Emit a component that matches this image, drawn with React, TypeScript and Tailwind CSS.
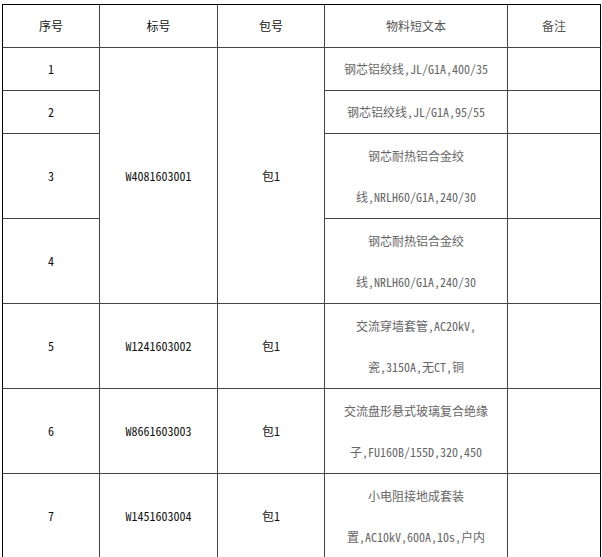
import React from "react";

const font = {
  fontFamily:
    '"Noto Sans Mono CJK SC", "Noto Sans CJK SC", "Liberation Mono", monospace',
};

type Row = { no: string; lines: string[] };

export default function App() {
  const td = "border-r border-b border-[#444] text-center align-middle p-0";
  const last = "border-r border-b border-r-black border-b-[#444] text-center align-middle p-0";
  const mat = "text-[#666] leading-[41px]";
  return (
    <div className="bg-white w-[602px] h-[557px] overflow-hidden" style={font}>
      <table
        className="ml-[2px] mt-[4px] border-separate border-spacing-0 table-fixed border-t border-l border-black text-[12px] text-[#111]"
        style={{ width: 599 }}
      >
        <colgroup>
          <col style={{ width: 97 }} />
          <col style={{ width: 118 }} />
          <col style={{ width: 107 }} />
          <col style={{ width: 183 }} />
          <col style={{ width: 93 }} />
        </colgroup>
        <tbody>
          <tr className="h-[43px]">
            <td className={td}>序号</td>
            <td className={td}>标号</td>
            <td className={td}>包号</td>
            <td className={`${td} text-[#555]`}>物料短文本</td>
            <td className={`${last} text-[#555]`}>备注</td>
          </tr>
          <tr className="h-[43px]">
            <td className={td}>1</td>
            <td className={td} rowSpan={4}>W4081603001</td>
            <td className={td} rowSpan={4}>包1</td>
            <td className={td}><span className="text-[#666]">钢芯铝绞线,JL/G1A,400/35</span></td>
            <td className={last}></td>
          </tr>
          <tr className="h-[43px]">
            <td className={td}>2</td>
            <td className={td}><span className="text-[#666]">钢芯铝绞线,JL/G1A,95/55</span></td>
            <td className={last}></td>
          </tr>
          <tr className="h-[85px]">
            <td className={td}>3</td>
            <td className={td}>
              <div className={mat}>钢芯耐热铝合金绞</div>
              <div className={mat}>线,NRLH60/G1A,240/30</div>
            </td>
            <td className={last}></td>
          </tr>
          <tr className="h-[85px]">
            <td className={td}>4</td>
            <td className={td}>
              <div className={mat}>钢芯耐热铝合金绞</div>
              <div className={mat}>线,NRLH60/G1A,240/30</div>
            </td>
            <td className={last}></td>
          </tr>
          <tr className="h-[85px]">
            <td className={td}>5</td>
            <td className={td}>W1241603002</td>
            <td className={td}>包1</td>
            <td className={td}>
              <div className={mat}>交流穿墙套管,AC20kV,</div>
              <div className={mat}>瓷,3150A,无CT,铜</div>
            </td>
            <td className={last}></td>
          </tr>
          <tr className="h-[85px]">
            <td className={td}>6</td>
            <td className={td}>W8661603003</td>
            <td className={td}>包1</td>
            <td className={td}>
              <div className={mat}>交流盘形悬式玻璃复合绝缘</div>
              <div className={mat}>子,FU160B/155D,320,450</div>
            </td>
            <td className={last}></td>
          </tr>
          <tr className="h-[85px]">
            <td className={td}>7</td>
            <td className={td}>W1451603004</td>
            <td className={td}>包1</td>
            <td className={td}>
              <div className={mat}>小电阻接地成套装</div>
              <div className={mat}>置,AC10kV,600A,10s,户内</div>
            </td>
            <td className={last}></td>
          </tr>
        </tbody>
      </table>
    </div>
  );
}
